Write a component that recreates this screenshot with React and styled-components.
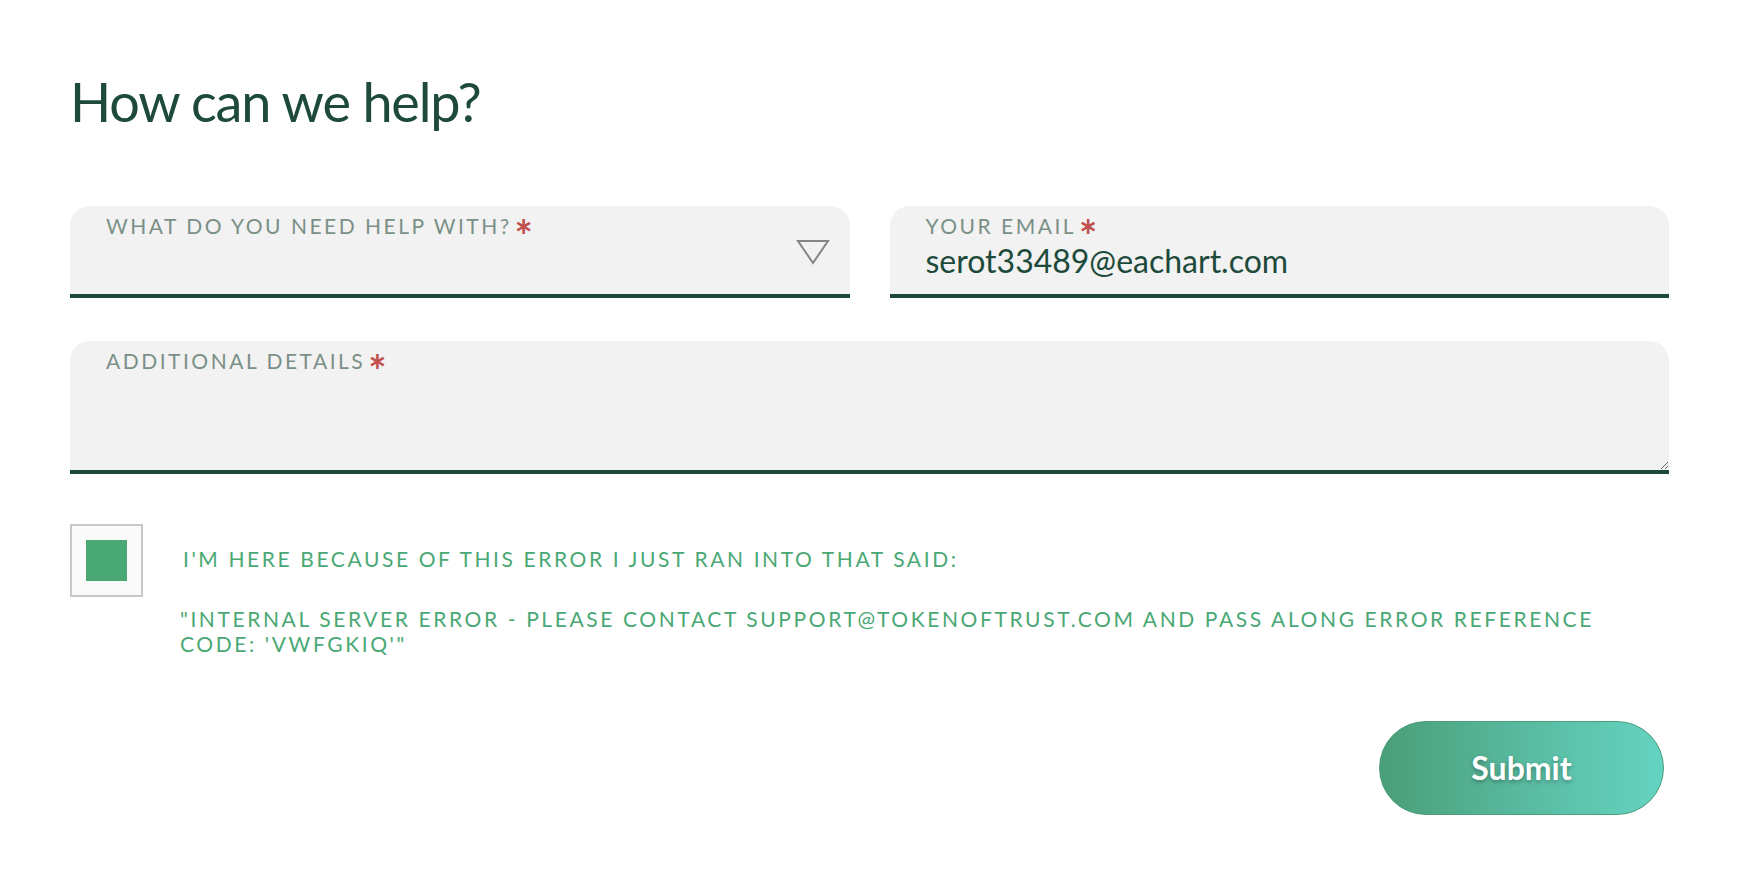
import React from 'react'
import styled, { createGlobalStyle } from 'styled-components'

const GlobalStyle = createGlobalStyle`
  body {
    margin: 0;
    background: #ffffff;
    font-family: Lato, "Noto Sans", sans-serif;
  }
`

const Page = styled.div`
  padding: 70px 69px 40px 70px;
`

const Title = styled.h1`
  margin: 0 0 71px;
  font-size: 54px;
  line-height: 1.2;
  font-weight: 400;
  letter-spacing: -1.2px;
  color: #1d4a3a;
`

const Form = styled.form`
  display: flex;
  flex-direction: column;
  gap: 43px;
`

const Row = styled.div`
  display: grid;
  grid-template-columns: 1fr 1fr;
  gap: 40px;
`

const Field = styled.div`
  position: relative;
  background: #f2f2f2;
  border-radius: 20px 20px 0 0;
  border-bottom: 4px solid #1d4a3a;
  height: ${p => p.$height}px;
  box-sizing: border-box;
  padding: 9px 36px 0;
  display: flex;
  flex-direction: column;
`

const Label = styled.label`
  font-size: 21px;
  line-height: 22px;
  letter-spacing: 2.5px;
  text-transform: uppercase;
  color: #7a9087;
  white-space: nowrap;
`

const Star = styled.span`
  display: inline-block;
  vertical-align: top;
  position: relative;
  top: 10px;
  height: 12px;
  margin-left: 3px;
  color: #c0504d;
  font-size: 43px;
  font-weight: 700;
  line-height: 22px;
  letter-spacing: 0;
`

const Value = styled.div`
  margin-top: 6px;
  font-size: 32px;
  line-height: 36px;
  color: #1d4a3a;
`

const Arrow = styled.svg`
  position: absolute;
  right: 20px;
  top: 33px;
`

const TextArea = styled.textarea`
  flex: 1;
  margin: 0 -36px 0 0;
  border: none;
  background: transparent;
  outline: none;
  font-family: inherit;
  font-size: 22px;
  color: #1d4a3a;
`

const CheckRow = styled.div`
  display: flex;
  gap: 40px;
  margin-top: 7px;
`

const Box = styled.div`
  flex: none;
  width: 73px;
  height: 73px;
  box-sizing: border-box;
  border: 2px solid #c8c8c8;
  background: #fafafa;
  display: flex;
  align-items: center;
  justify-content: center;
`

const Fill = styled.div`
  width: 41px;
  height: 41px;
  background: #4aa874;
`

const ErrorText = styled.div`
  padding-top: 22px;
  color: #4aa874;
  font-size: 21px;
  line-height: 25px;
  letter-spacing: 2.6px;
  text-transform: uppercase;
  p {
    margin: 0;
  }
  p + p {
    margin-top: 35px;
    margin-left: -3px;
  }
`

const Actions = styled.div`
  display: flex;
  justify-content: flex-end;
  padding-right: 5px;
  margin-top: 22px;
`

const Submit = styled.button`
  width: 285px;
  height: 94px;
  border-radius: 47px;
  border: 1.5px solid #4a9e7a;
  background: linear-gradient(90deg, #4a9e78 0%, #5bbfa6 60%, #64d3c1 100%);
  color: #ffffff;
  font-family: inherit;
  font-weight: 700;
  font-size: 32px;
  text-shadow: 0 2px 4px rgba(0, 0, 0, 0.3);
  cursor: pointer;
`

export default function App() {
  return (
    <Page>
      <GlobalStyle />
      <Title>How can we help?</Title>
      <Form onSubmit={e => e.preventDefault()}>
        <Row>
          <Field $height={92}>
            <Label>What do you need help with?<Star>*</Star></Label>
            <Arrow width="34" height="26" viewBox="0 0 34 26">
              <path d="M2 2 L32 2 L17 24 Z" fill="none" stroke="#858585" strokeWidth="2" strokeLinejoin="miter" />
            </Arrow>
          </Field>
          <Field $height={92}>
            <Label>Your email<Star>*</Star></Label>
            <Value>serot33489@eachart.com</Value>
          </Field>
        </Row>
        <Field $height={133}>
          <Label>Additional details<Star>*</Star></Label>
          <TextArea />
        </Field>
        <CheckRow>
          <Box><Fill /></Box>
          <ErrorText>
            <p>I'm here because of this error I just ran into that said:</p>
            <p>"Internal Server Error - Please contact support@tokenoftrust.com and pass along error reference code: 'VWFGKIQ'"</p>
          </ErrorText>
        </CheckRow>
        <Actions>
          <Submit type="submit">Submit</Submit>
        </Actions>
      </Form>
    </Page>
  )
}
